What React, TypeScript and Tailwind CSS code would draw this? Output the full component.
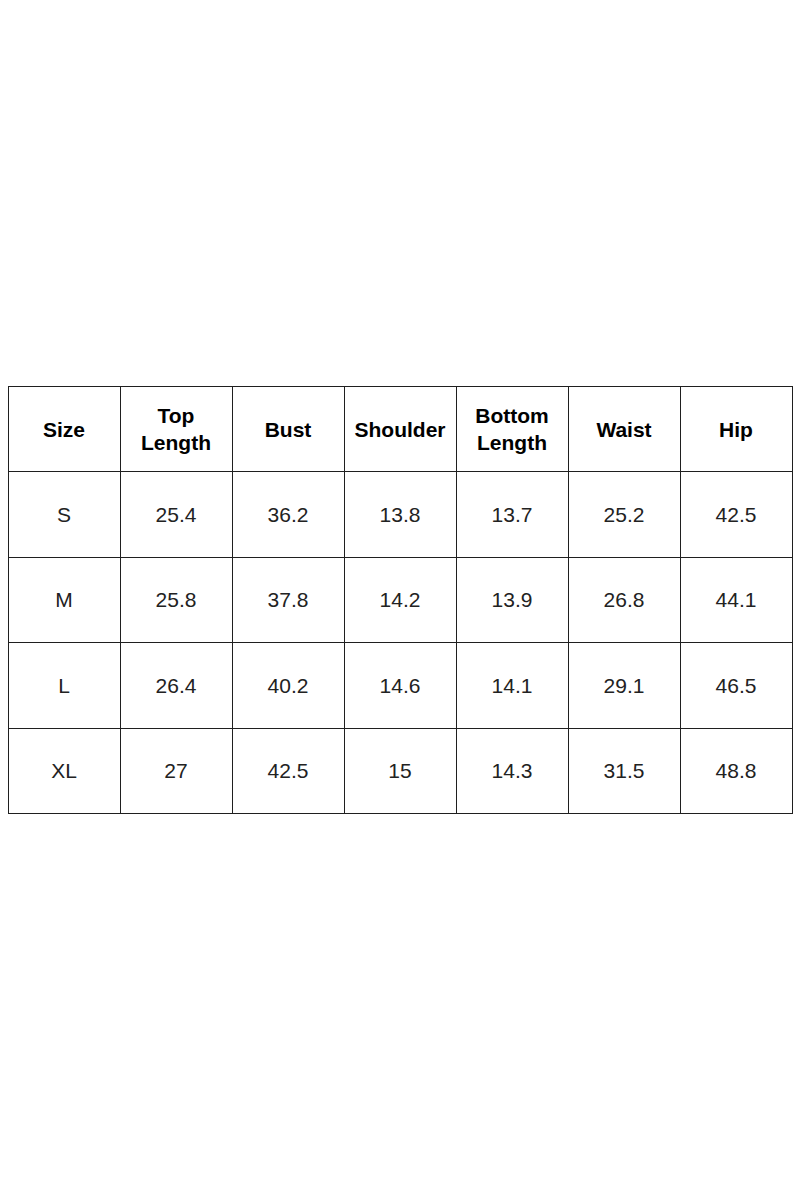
const headers = ['Size', 'Top\nLength', 'Bust', 'Shoulder', 'Bottom\nLength', 'Waist', 'Hip'];

const rows = [
  ['S', '25.4', '36.2', '13.8', '13.7', '25.2', '42.5'],
  ['M', '25.8', '37.8', '14.2', '13.9', '26.8', '44.1'],
  ['L', '26.4', '40.2', '14.6', '14.1', '29.1', '46.5'],
  ['XL', '27', '42.5', '15', '14.3', '31.5', '48.8'],
];

export default function App() {
  return (
    <div
      className="flex h-[1200px] w-[800px] items-center justify-center bg-white"
      style={{ fontFamily: '"Liberation Sans", Arial, sans-serif' }}
    >
      <div className="grid h-[428px] w-[785px] grid-cols-7 grid-rows-5 border-l border-t border-[#1f1f1f]">
        {headers.map((h) => (
          <div
            key={h}
            className="flex items-center justify-center whitespace-pre-line border-b border-r border-[#1f1f1f] text-center text-[21px] font-bold leading-[27px] text-black"
          >
            {h}
          </div>
        ))}
        {rows.map((r) =>
          r.map((v, i) => (
            <div
              key={r[0] + i}
              className="flex items-center justify-center border-b border-r border-[#1f1f1f] text-[21px] text-[#222]"
            >
              {v}
            </div>
          ))
        )}
      </div>
    </div>
  );
}
